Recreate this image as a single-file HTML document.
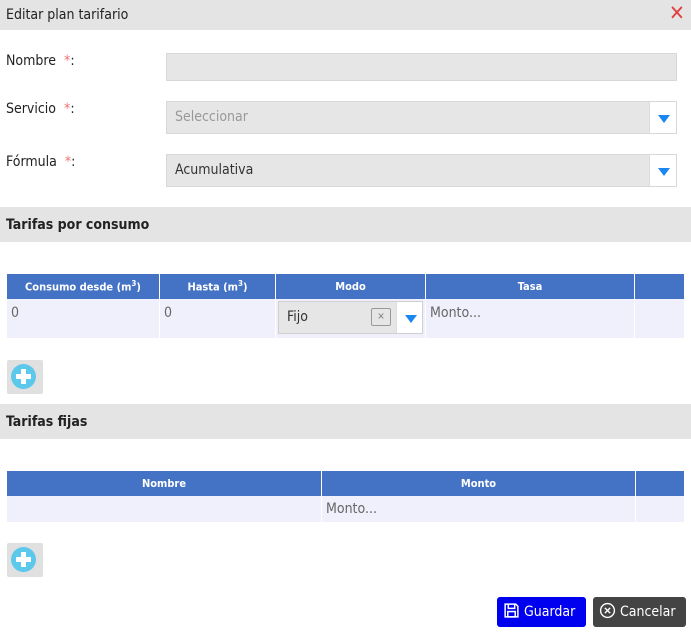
<!DOCTYPE html>
<html><head><style>
*{box-sizing:border-box;margin:0;padding:0}
body{width:691px;height:633px;background:#fff;font-family:"DejaVu Sans Condensed","DejaVu Sans","Liberation Sans",sans-serif;font-size:13px;color:#222;position:relative;overflow:hidden}
.a{position:absolute}
.bar{left:0;width:691px;background:#e4e4e4}
.req{color:#f07070}
.inp{background:#e6e6e6;border:1px solid #d8d8d8}
.arr{position:absolute;right:0;top:0;bottom:0;width:27px;background:#fff;border-left:1px solid #ddd}
.arr:after{content:"";position:absolute;left:8px;top:50%;margin-top:-3px;border-left:6px solid transparent;border-right:6px solid transparent;border-top:8px solid #1a86f0}
table{border-collapse:collapse;position:absolute;left:6px;width:678px}
th{background:#4472c4;color:#fff;font-size:11px;font-weight:bold;border-left:1px solid #fff;height:25px}
td{background:#f0f0fc;border-left:1px solid #fff;vertical-align:top;color:#666;padding:6px 4px;font-size:14px}
.add{left:7px;width:36px;height:34px;background:#e0e0e0;border-radius:2px}
.add i{position:absolute;left:4px;top:4px;width:25px;height:25px;border-radius:50%;background:#5bc8ec}
.add i:before{content:"";position:absolute;left:10px;top:5px;width:5px;height:15px;background:#fff}
.add i:after{content:"";position:absolute;left:5px;top:10px;width:15px;height:5px;background:#fff}
.btn{top:597px;height:30px;border-radius:3px;color:#fff;font-size:14px;line-height:30px}
</style></head><body>
<div class="a bar" style="top:0;height:30px"></div>
<div class="a" style="left:6px;top:7px;font-size:14px">Editar plan tarifario</div>
<div class="a" style="left:669px;top:1px;color:#e04040;font-size:21px;font-weight:bold">✕</div>

<div class="a" style="left:6px;top:53px;font-size:14px">Nombre&nbsp; <span class="req">*</span>:</div>
<div class="a inp" style="left:166px;top:53px;width:511px;height:28px"></div>
<div class="a" style="left:6px;top:101px;font-size:14px">Servicio&nbsp; <span class="req">*</span>:</div>
<div class="a inp" style="left:166px;top:101px;width:511px;height:33px"><span style="position:absolute;left:8px;top:7px;color:#999;font-size:14px">Seleccionar</span><div class="arr"></div></div>
<div class="a" style="left:6px;top:154px;font-size:14px">Fórmula&nbsp; <span class="req">*</span>:</div>
<div class="a inp" style="left:166px;top:154px;width:511px;height:33px"><span style="position:absolute;left:8px;top:7px;color:#333;font-size:14px">Acumulativa</span><div class="arr"></div></div>

<div class="a bar" style="top:207px;height:35px"></div>
<div class="a" style="left:6px;top:217px;font-weight:bold;font-size:14px">Tarifas por consumo</div>
<table style="top:274px">
<tr><th style="width:153px">Consumo desde (m<sup style="font-size:8px">3</sup>)</th><th style="width:116px">Hasta (m<sup style="font-size:8px">3</sup>)</th><th style="width:150px">Modo</th><th style="width:209px">Tasa</th><th></th></tr>
<tr style="height:39px"><td>0</td><td>0</td><td style="padding:2px"><div style="position:relative;height:33px;background:#e6e6e6;border:1px solid #d0d0d0"><span style="position:absolute;left:8px;top:7px;color:#333;font-size:14px">Fijo</span><span style="position:absolute;left:92px;top:6px;width:20px;height:18px;border:1px solid #999;border-radius:2px;font-size:10px;text-align:center;line-height:16px;color:#777">×</span><div class="arr" style="width:26px"></div></div></td><td>Monto...</td><td></td></tr>
</table>
<div class="a add" style="top:360px"><i></i></div>

<div class="a bar" style="top:404px;height:35px"></div>
<div class="a" style="left:6px;top:414px;font-weight:bold;font-size:14px">Tarifas fijas</div>
<table style="top:471px">
<tr><th style="width:315px;height:23px">Nombre</th><th style="width:314px;height:23px">Monto</th><th></th></tr>
<tr style="height:26px"><td></td><td style="padding:5px 4px">Monto...</td><td></td></tr>
</table>
<div class="a add" style="top:543px"><i></i></div>

<div class="a btn" style="left:497px;width:89px;background:#0000f0;padding-left:6px"><svg width="17" height="17" viewBox="0 0 16 16" style="vertical-align:-3px" fill="none" stroke="#fff" stroke-width="1.4"><path d="M2 2h10l2 2v10H2z"/><path d="M5 2v4h6V2"/><rect x="4.5" y="9" width="7" height="5"/></svg> Guardar</div>
<div class="a btn" style="left:593px;width:93px;background:#444;padding-left:6px"><svg width="17" height="17" viewBox="0 0 16 16" style="vertical-align:-3px" fill="none" stroke="#fff" stroke-width="1.3"><circle cx="8" cy="8" r="6.5"/><path d="M5.5 5.5l5 5M10.5 5.5l-5 5"/></svg> Cancelar</div>
</body></html>
